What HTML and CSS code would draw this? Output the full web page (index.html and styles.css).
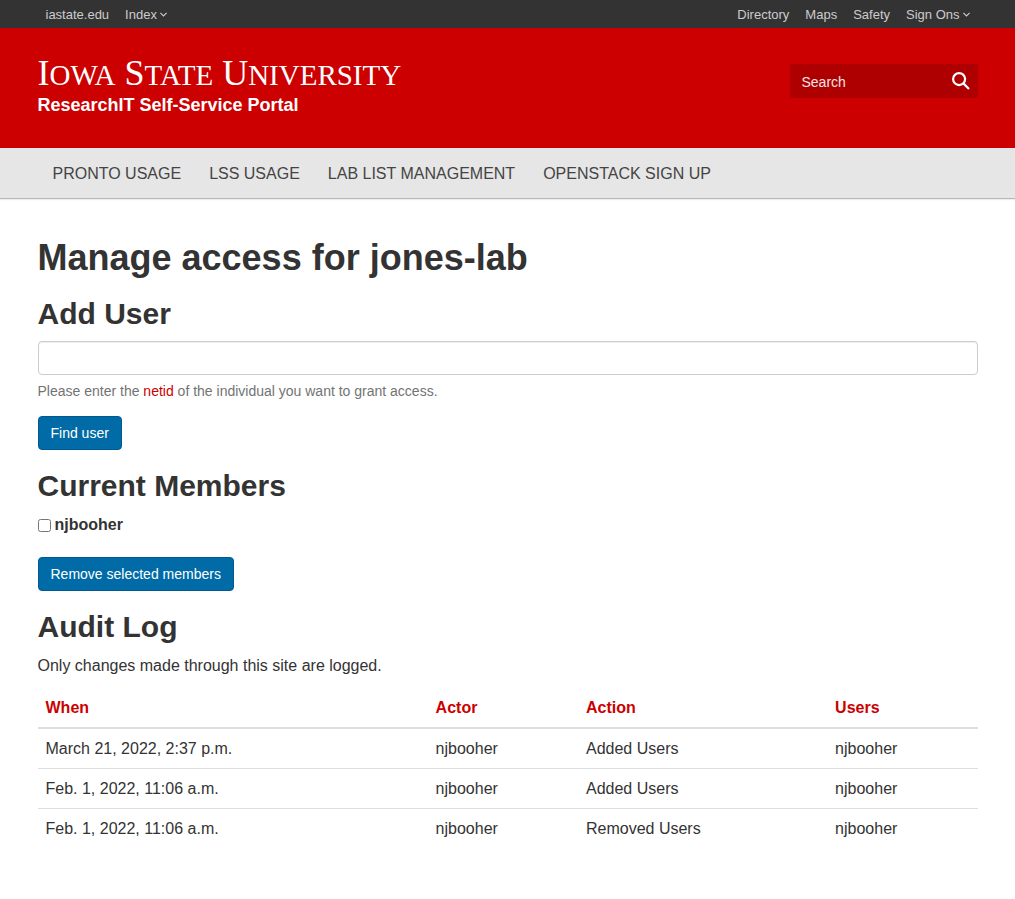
FILE: index.html
```html
<!DOCTYPE html>
<html lang="en">
<head>
<meta charset="utf-8">
<meta name="viewport" content="width=device-width, initial-scale=1">
<title>Manage access for jones-lab</title>
<link rel="stylesheet" href="styles.css">
</head>
<body>
<div class="topbar">
  <div class="container topbar-inner">
    <nav class="topbar-links" aria-label="University">
      <a href="#">iastate.edu</a>
      <a href="#">Index<svg class="chevron" viewBox="0 0 7 5" aria-hidden="true"><path d="M.4 .8 3.5 3.9 6.6 .8"/></svg></a>
    </nav>
    <nav class="topbar-links" aria-label="Services">
      <a href="#">Directory</a>
      <a href="#">Maps</a>
      <a href="#">Safety</a>
      <a href="#">Sign Ons<svg class="chevron" viewBox="0 0 7 5" aria-hidden="true"><path d="M.4 .8 3.5 3.9 6.6 .8"/></svg></a>
    </nav>
  </div>
</div>
<header class="masthead">
  <div class="container masthead-inner">
    <a class="brand" href="#">
      <span class="wordmark"><span class="cap">I</span>OWA<span class="cap"> S</span>TATE<span class="cap"> U</span>NIVERSITY</span>
      <span class="site-name">ResearchIT Self-Service Portal</span>
    </a>
    <form class="search" role="search">
      <input class="search-input" type="text" placeholder="Search" aria-label="Search">
      <button class="search-button" type="submit" aria-label="Submit search"><svg class="search-icon" viewBox="0 0 18 18" aria-hidden="true"><circle cx="7.1" cy="7.1" r="6"/><path d="M11.4 11.4 17 17"/></svg></button>
    </form>
  </div>
</header>
<nav class="mainnav" aria-label="Main">
  <div class="container mainnav-inner">
    <a href="#">PRONTO USAGE</a>
    <a href="#">LSS USAGE</a>
    <a href="#">LAB LIST MANAGEMENT</a>
    <a href="#">OPENSTACK SIGN UP</a>
  </div>
</nav>
<main class="container content">
  <h1>Manage access for jones-lab</h1>
  <form>
    <h2><label for="netid">Add User</label></h2>
    <input class="field" id="netid" type="text">
    <p class="help">Please enter the <a href="#">netid</a> of the individual you want to grant access.</p>
    <button class="button" type="submit">Find user</button>
  </form>
  <form>
    <h2>Current Members</h2>
    <div class="member"><input class="tick" type="checkbox" id="member-1"><label for="member-1">njbooher</label></div>
    <button class="button" type="submit">Remove selected members</button>
  </form>
  <h2>Audit Log</h2>
  <p class="note">Only changes made through this site are logged.</p>
  <table class="log">
    <thead>
      <tr><th class="col-when">When</th><th class="col-actor">Actor</th><th class="col-action">Action</th><th class="col-users">Users</th></tr>
    </thead>
    <tbody>
      <tr><td>March 21, 2022, 2:37 p.m.</td><td>njbooher</td><td>Added Users</td><td>njbooher</td></tr>
      <tr><td>Feb. 1, 2022, 11:06 a.m.</td><td>njbooher</td><td>Added Users</td><td>njbooher</td></tr>
      <tr><td>Feb. 1, 2022, 11:06 a.m.</td><td>njbooher</td><td>Removed Users</td><td>njbooher</td></tr>
    </tbody>
  </table>
</main>
</body>
</html>
```
FILE: styles.css
```css
* { box-sizing: border-box; }
body {
  margin: 0;
  background: #fff;
  color: #333;
  font: 16px/24px "Nimbus Sans", Helvetica, "Liberation Sans", Arial, sans-serif;
}
a { color: #c00; text-decoration: none; }
input, button { font: inherit; }

.container { max-width: 970px; margin: 0 auto; padding: 0 15px; }

.topbar { background: #333; }
.topbar-inner { display: flex; justify-content: space-between; }
.topbar-links { display: flex; gap: 16px; padding: 0 8px; }
.topbar-links a { color: #ccc; font-size: 13px; line-height: 20px; padding: 5px 0 3px; }
.chevron {
  width: 7px;
  height: 5px;
  margin-left: 3px;
  vertical-align: 2px;
  fill: none;
  stroke: #ccc;
  stroke-width: 1.1;
}

.masthead { background: #c00; color: #fff; }
.masthead-inner {
  display: flex;
  justify-content: space-between;
  align-items: flex-start;
  min-height: 120px;
}
.brand { color: #fff; padding-top: 26px; }
.wordmark {
  display: block;
  font: 29px/38px "Liberation Serif", serif;
  white-space: pre;
}
.cap { font-size: 36px; }
.site-name {
  display: block;
  font: bold 18px/22px "Liberation Sans", Arial, sans-serif;
}
.search {
  display: flex;
  width: 188px;
  height: 34px;
  margin-top: 36px;
  background: #ae0000;
}
.search-input {
  flex: 1;
  min-width: 0;
  padding: 2px 12px 0;
  border: 0;
  background: transparent;
  color: #fff;
  font-size: 14px;
}
.search-input::placeholder { color: #fff; opacity: .9; }
.search-button { display: flex; padding: 8px; border: 0; background: transparent; }
.search-icon {
  width: 18px;
  height: 18px;
  fill: none;
  stroke: #fff;
  stroke-width: 2.2;
}

.mainnav {
  background: #e6e6e6;
  border-bottom: 1px solid #b8b8b8;
  box-shadow: 0 1px 1px #eee;
}
.mainnav-inner { display: flex; gap: 28px; padding: 0 30px; }
.mainnav a { color: #444; padding: 14px 0 12px; }

.content { padding-bottom: 40px; }
h1, h2 { margin: 0; font-weight: bold; }
h1 { font-size: 36px; line-height: 42px; padding-top: 38px; margin-bottom: 16px; }
h2 { font-size: 30px; line-height: 38px; margin-bottom: 8px; }
.field {
  display: block;
  width: 100%;
  height: 34px;
  padding: 6px 12px;
  border: 1px solid #ccc;
  border-radius: 4px;
  box-shadow: inset 0 1px 1px #eee;
  font-size: 14px;
}
.help { margin: 5px 0 14px; color: #737373; font-size: 14px; line-height: 22px; }
.button {
  display: block;
  height: 34px;
  margin-bottom: 17px;
  padding: 0 12px;
  border: 1px solid #005a8f;
  border-radius: 4px;
  background: #006ba6;
  color: #fff;
  font-size: 14px;
}
.member {
  display: flex;
  align-items: center;
  gap: 4px;
  margin-bottom: 20px;
  font-weight: bold;
}
.tick { width: 13px; height: 13px; margin: 0; }
.note { margin: 0 0 10px; }
.log { width: 100%; border-collapse: collapse; }
.log th, .log td { padding: 8px; line-height: 23px; text-align: left; }
.log th { color: #c00; border-bottom: 2px solid #ddd; }
.log td { border-top: 1px solid #ddd; }
.col-when { width: 41.5%; }
.col-actor { width: 16%; }
.col-action { width: 26.5%; }
.col-users { width: 16%; }
```
